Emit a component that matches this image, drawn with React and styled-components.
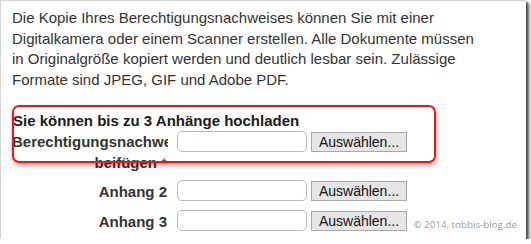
import React from 'react';
import styled, { createGlobalStyle } from 'styled-components';

const GlobalStyle = createGlobalStyle`
  html, body {
    margin: 0;
    padding: 0;
    background: #ffffff;
  }
`;

const Frame = styled.div`
  position: relative;
  box-sizing: border-box;
  width: 526px;
  height: 239px;
  background: #fff;
  border-top: 1px solid #d4d4d4;
  border-left: 1px solid #d4d4d4;
  box-shadow: 2px 2px 2px #4a4a4a, 4px 4px 3px rgba(0, 0, 0, 0.35);
  padding: 7px 0 0 11px;
  font-family: "Liberation Sans", Arial, sans-serif;
  color: #333;
  overflow: hidden;
`;

const Intro = styled.p`
  margin: 0;
  width: 490px;
  font-size: 15px;
  line-height: 20.5px;
`;

const Heading = styled.div`
  margin-top: 20px;
  font-size: 15px;
  font-weight: bold;
  color: #1a1a1a;
  line-height: 21px;
  padding-left: 1px;
`;

const Rows = styled.div`
  display: flex;
  flex-direction: column;
  gap: 7px;
`;

const Row = styled.div`
  display: flex;
  align-items: flex-start;
`;

const Label = styled.label`
  box-sizing: border-box;
  width: 156px;
  flex-shrink: 0;
  overflow: hidden;
  text-align: right;
  font-size: 15px;
  font-weight: bold;
  color: #333;
  line-height: ${(p) => (p.$tall ? '21px' : '23px')};
  padding-right: 1px;
`;

const Required = styled.span`
  color: #b22222;
  font-weight: normal;
`;

const FileInput = styled.div`
  box-sizing: border-box;
  width: 130px;
  height: 21px;
  margin-left: 9px;
  border: 1px solid #b8b8b8;
  border-radius: 5px;
  background: #fff;
`;

const PickButton = styled.button`
  box-sizing: border-box;
  width: 96px;
  height: 20px;
  margin: 1px 0 0 4px;
  padding: 0;
  border: 1px solid #a9a9a9;
  border-radius: 0;
  background: #e6e6e6;
  font-family: "Liberation Sans", Arial, sans-serif;
  font-size: 14px;
  color: #111;
  line-height: 18px;
`;

const Marker = styled.div`
  position: absolute;
  left: 11px;
  top: 104px;
  width: 424px;
  height: 58px;
  box-sizing: border-box;
  border: 2px solid #ff1010;
  border-radius: 7px;
  box-shadow: 1px 3px 5px rgba(0, 0, 0, 0.3);
  pointer-events: none;
`;

const Credit = styled.div`
  position: absolute;
  right: 9px;
  bottom: 8px;
  font-family: "Open Sans", "DejaVu Sans", sans-serif;
  font-size: 9.8px;
  color: #9a9a9a;
`;

const attachments = [
  { id: 1, label: 'Berechtigungsnachweis beifügen', required: true },
  { id: 2, label: 'Anhang 2' },
  { id: 3, label: 'Anhang 3' },
];

export default function App() {
  return (
    <>
      <GlobalStyle />
      <Frame>
        <Intro>
          Die Kopie Ihres Berechtigungsnachweises können Sie mit einer<br />
          Digitalkamera oder einem Scanner erstellen. Alle Dokumente müssen<br />
          in Originalgröße kopiert werden und deutlich lesbar sein. Zulässige<br />
          Formate sind JPEG, GIF und Adobe PDF.
        </Intro>
        <Heading>Sie können bis zu 3 Anhänge hochladen</Heading>
        <Rows>
          {attachments.map((a) => (
            <Row key={a.id}>
              <Label $tall={a.required}>
                {a.label}
                {a.required && <Required> *</Required>}
              </Label>
              <FileInput />
              <PickButton type="button">Auswählen...</PickButton>
            </Row>
          ))}
        </Rows>
        <Marker />
        <Credit>© 2014, tobbis-blog.de</Credit>
      </Frame>
    </>
  );
}
